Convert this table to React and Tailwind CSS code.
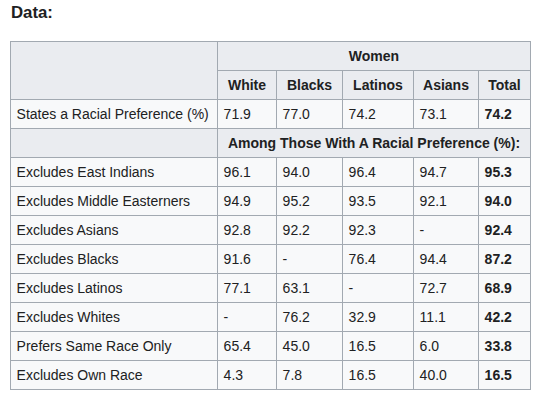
import React from 'react';

const rows = [
  ['Excludes East Indians', '96.1', '94.0', '96.4', '94.7', '95.3'],
  ['Excludes Middle Easterners', '94.9', '95.2', '93.5', '92.1', '94.0'],
  ['Excludes Asians', '92.8', '92.2', '92.3', '-', '92.4'],
  ['Excludes Blacks', '91.6', '-', '76.4', '94.4', '87.2'],
  ['Excludes Latinos', '77.1', '63.1', '-', '72.7', '68.9'],
  ['Excludes Whites', '-', '76.2', '32.9', '11.1', '42.2'],
  ['Prefers Same Race Only', '65.4', '45.0', '16.5', '6.0', '33.8'],
  ['Excludes Own Race', '4.3', '7.8', '16.5', '40.0', '16.5'],
];

const th = 'border border-[#a2a9b1] bg-[#eaecf0] px-[5.6px] py-[3px] text-center font-bold';
const td = 'border border-[#a2a9b1] px-[5.6px] py-[3px] text-left font-normal';

const App = () => {
  return (
    <div className="min-h-[398px] w-[537px] bg-white px-[10px] pt-[1px] text-[#202122] font-['Liberation_Sans',Arial,sans-serif]">
      <h3 className="text-[16.8px] font-bold leading-[24px] pl-[1px]">Data:</h3>

      <table className="mt-[16px] w-[520px] table-fixed border-collapse border border-[#a2a9b1] bg-[#f8f9fa] text-[14px] leading-[22px]">
        <colgroup>
          <col className="w-[207px]" />
          <col className="w-[59px]" />
          <col className="w-[66px]" />
          <col className="w-[71px]" />
          <col className="w-[65px]" />
          <col className="w-[52px]" />
        </colgroup>
        <thead>
          <tr>
            <th rowSpan={2} className={th}></th>
            <th colSpan={5} className={th}>Women</th>
          </tr>
          <tr>
            <th className={th}>White</th>
            <th className={th}>Blacks</th>
            <th className={th}>Latinos</th>
            <th className={th}>Asians</th>
            <th className={th}>Total</th>
          </tr>
        </thead>
        <tbody>
          <tr>
            <td className={td}>States a Racial Preference (%)</td>
            <td className={td}>71.9</td>
            <td className={td}>77.0</td>
            <td className={td}>74.2</td>
            <td className={td}>73.1</td>
            <td className={td + ' !font-bold'}>74.2</td>
          </tr>
          <tr>
            <th className={th}></th>
            <th colSpan={5} className={th + ' whitespace-nowrap'}>
              Among Those With A Racial Preference (%):
            </th>
          </tr>
          {rows.map((r) => (
            <tr key={r[0]}>
              <td className={td}>{r[0]}</td>
              <td className={td}>{r[1]}</td>
              <td className={td}>{r[2]}</td>
              <td className={td}>{r[3]}</td>
              <td className={td}>{r[4]}</td>
              <td className={td + ' !font-bold'}>{r[5]}</td>
            </tr>
          ))}
        </tbody>
      </table>
    </div>
  );
};

export default App;
